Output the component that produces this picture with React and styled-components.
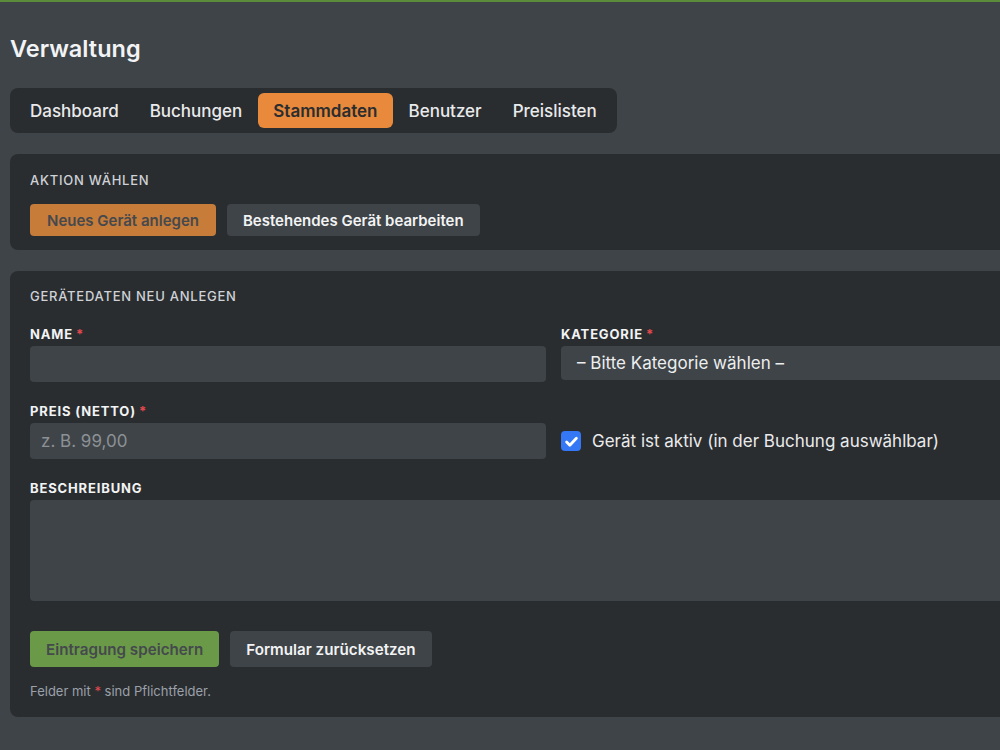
import React from "react";
import styled, { createGlobalStyle } from "styled-components";

const GlobalStyle = createGlobalStyle`
  html, body {
    margin: 0;
    padding: 0;
    overflow: hidden;
    background-color: #3f4448;
    font-family: Inter, "Noto Sans", "Liberation Sans", sans-serif;
  }
`;

const TopLine = styled.div`
  height: 2px;
  background-color: #5b8c3a;
`;

const Page = styled.main`
  width: 1088px;
  padding: 32px 10px 40px;
`;

const Title = styled.h1`
  margin: 0 0 25px;
  font-size: 23.5px;
  line-height: 29px;
  font-weight: 600;
  color: #f2f3f4;
`;

const Tabs = styled.nav`
  display: inline-flex;
  padding: 5px;
  gap: 1px;
  background-color: #2a2d30;
  border-radius: 8px;
`;

const Tab = styled.button`
  height: 35px;
  padding: 0 15px;
  border: none;
  border-radius: 6px;
  font-family: inherit;
  font-size: 17px;
  font-weight: ${(p) => (p.$active ? 600 : 500)};
  color: ${(p) => (p.$active ? "#2a2d30" : "#e9eaeb")};
  background-color: ${(p) => (p.$active ? "#e8893b" : "transparent")};
`;

const Panel = styled.section`
  margin-top: 21px;
  background-color: #2a2d30;
  border-radius: 8px;
  padding: ${(p) => p.$pad};
`;

const SectionTitle = styled.h2`
  margin: 0;
  font-size: 13px;
  line-height: 16px;
  font-weight: 500;
  letter-spacing: 0.75px;
  text-transform: uppercase;
  color: #cfd2d6;
`;

const ButtonRow = styled.div`
  display: flex;
  gap: 11px;
  margin-top: ${(p) => p.$top};
`;

const Button = styled.button`
  height: ${(p) => p.$h};
  padding: 0 ${(p) => p.$px};
  border: none;
  border-radius: 4px;
  font-family: inherit;
  font-size: ${(p) => p.$fs};
  font-weight: 600;
  color: ${(p) => (p.$fill ? "#45494d" : "#f2f3f4")};
  background-color: ${(p) => p.$fill || "#3f4448"};
`;

const FormGrid = styled.div`
  display: grid;
  grid-template-columns: 516px 516px;
  column-gap: 15px;
  row-gap: 21px;
  margin-top: 22px;
`;

const Field = styled.div`
  display: flex;
  flex-direction: column;
  gap: 4px;
  grid-column: ${(p) => (p.$wide ? "1 / span 2" : "auto")};
`;

const Label = styled.label`
  font-size: 13px;
  line-height: 16px;
  font-weight: 700;
  letter-spacing: 0.85px;
  color: #f2f3f4;
`;

const Star = styled.span`
  color: #e5484d;
  margin-left: ${(p) => (p.$inline ? "0" : "3px")};
`;

const Input = styled.input`
  box-sizing: border-box;
  height: 36px;
  padding: 0 11px;
  border: none;
  border-radius: 4px;
  background-color: #3f4448;
  font-family: inherit;
  font-size: 17px;
  color: #f2f3f4;
  outline: none;

  &::placeholder {
    color: #8c9196;
  }
`;

const Select = styled.div`
  box-sizing: border-box;
  height: 34px;
  display: flex;
  align-items: center;
  padding: 0 16px;
  border-radius: 4px;
  background-color: #3f4448;
  font-size: 17px;
  color: #eceeef;
`;

const Textarea = styled.textarea`
  box-sizing: border-box;
  height: 101px;
  border: none;
  border-radius: 4px;
  background-color: #3f4448;
  resize: none;
  outline: none;
`;

const CheckRow = styled.label`
  display: flex;
  align-items: center;
  gap: 11px;
  align-self: end;
  height: 36px;
  font-size: 17px;
  color: #e9eaeb;
`;

const CheckBox = styled.span`
  width: 20px;
  height: 20px;
  border-radius: 4px;
  background-color: #3478f6;
  display: flex;
  align-items: center;
  justify-content: center;
`;

const Note = styled.p`
  margin: 16px 0 0;
  font-size: 13px;
  line-height: 16px;
  color: #9aa1aa;
`;

const App = () => {
  const tabs = ["Dashboard", "Buchungen", "Stammdaten", "Benutzer", "Preislisten"];

  return (
    <>
      <GlobalStyle />
      <TopLine />
      <Page>
        <Title>Verwaltung</Title>
        <Tabs>
          {tabs.map((t) => (
            <Tab key={t} $active={t === "Stammdaten"}>
              {t}
            </Tab>
          ))}
        </Tabs>

        <Panel $pad="18px 20px 14px">
          <SectionTitle>Aktion wählen</SectionTitle>
          <ButtonRow $top="16px">
            <Button $h="32px" $px="17px" $fs="15px" $fill="#c77c3a">
              Neues Gerät anlegen
            </Button>
            <Button $h="32px" $px="16px" $fs="15px">
              Bestehendes Gerät bearbeiten
            </Button>
          </ButtonRow>
        </Panel>

        <Panel $pad="17px 20px 18px">
          <SectionTitle>Gerätedaten neu anlegen</SectionTitle>
          <FormGrid>
            <Field>
              <Label>
                NAME<Star>*</Star>
              </Label>
              <Input />
            </Field>
            <Field>
              <Label>
                KATEGORIE<Star>*</Star>
              </Label>
              <Select>– Bitte Kategorie wählen –</Select>
            </Field>
            <Field>
              <Label>
                PREIS (NETTO)<Star>*</Star>
              </Label>
              <Input placeholder="z. B. 99,00" />
            </Field>
            <CheckRow>
              <CheckBox>
                <svg width="15" height="15" viewBox="0 0 16 16">
                  <path
                    d="M2.8 8.6l3.4 3.4L13.2 4.6"
                    fill="none"
                    stroke="#fff"
                    strokeWidth="3"
                    strokeLinecap="round"
                    strokeLinejoin="round"
                  />
                </svg>
              </CheckBox>
              Gerät ist aktiv (in der Buchung auswählbar)
            </CheckRow>
            <Field $wide>
              <Label>BESCHREIBUNG</Label>
              <Textarea />
            </Field>
          </FormGrid>
          <ButtonRow $top="30px">
            <Button $h="36px" $px="16px" $fs="15.2px" $fill="#6a9a48">
              Eintragung speichern
            </Button>
            <Button $h="36px" $px="16px" $fs="15.2px">
              Formular zurücksetzen
            </Button>
          </ButtonRow>
          <Note>
            Felder mit <Star $inline>*</Star> sind Pflichtfelder.
          </Note>
        </Panel>
      </Page>
    </>
  );
};

export default App;
